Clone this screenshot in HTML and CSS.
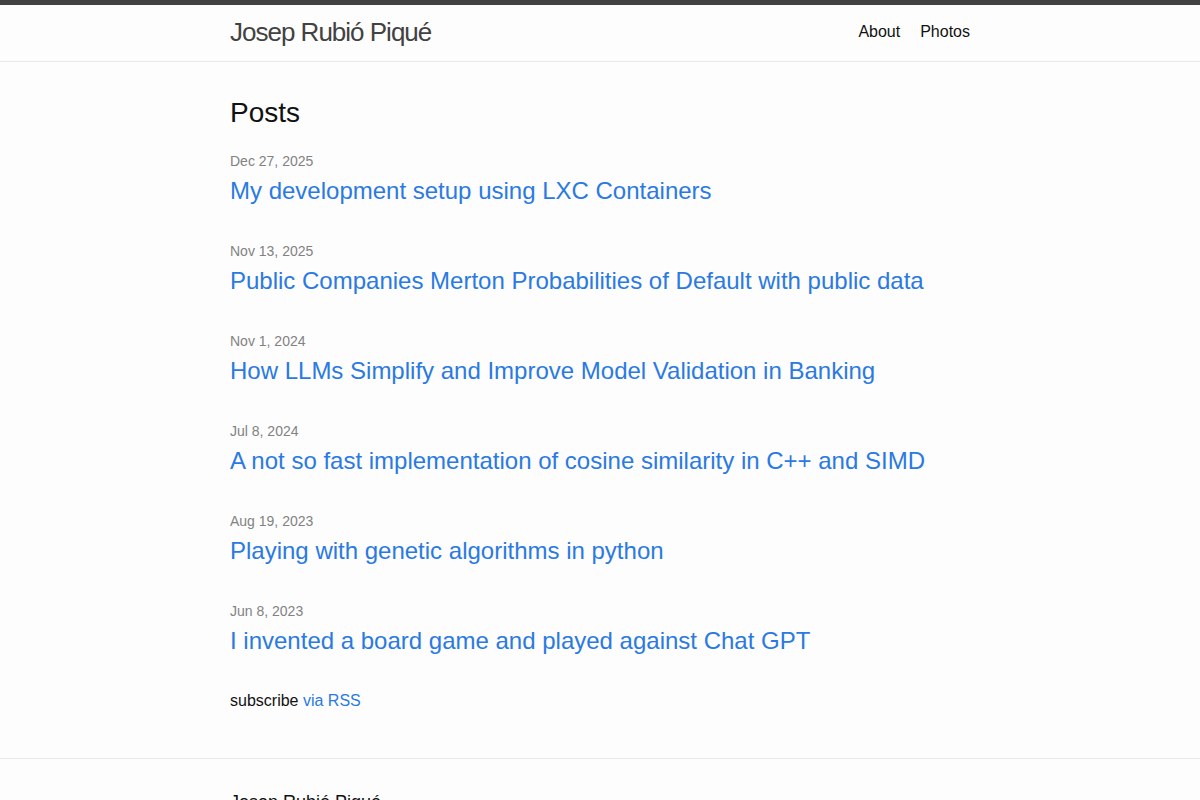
FILE: index.html
```html
<!DOCTYPE html>
<html lang="en">
<head>
  <meta charset="UTF-8" />
  <meta name="viewport" content="width=device-width, initial-scale=1.0"/>
  <title>Josep Rubió Piqué</title>
  <link rel="stylesheet" href="styles.css">
</head>
<body>

  <!-- Header -->
  <header class="site-header">
    <div class="wrapper header-row">
      <a class="site-title" href="#">Josep Rubió Piqué</a>
      <nav class="site-nav">
        <a class="page-link" href="#">About</a>
        <a class="page-link" href="#">Photos</a>
      </nav>
    </div>
  </header>

  <!-- Posts -->
  <main class="page-content">
    <div class="wrapper">
      <h2 class="post-list-heading">Posts</h2>
      <ul class="post-list">
        <li>
          <span class="post-meta">Dec 27, 2025</span>
          <h3><a class="post-link" href="#">My development setup using LXC Containers</a></h3>
        </li>
        <li>
          <span class="post-meta">Nov 13, 2025</span>
          <h3><a class="post-link" href="#">Public Companies Merton Probabilities of Default with public data</a></h3>
        </li>
        <li>
          <span class="post-meta">Nov 1, 2024</span>
          <h3><a class="post-link" href="#">How LLMs Simplify and Improve Model Validation in Banking</a></h3>
        </li>
        <li>
          <span class="post-meta">Jul 8, 2024</span>
          <h3><a class="post-link" href="#">A not so fast implementation of cosine similarity in C++ and SIMD</a></h3>
        </li>
        <li>
          <span class="post-meta">Aug 19, 2023</span>
          <h3><a class="post-link" href="#">Playing with genetic algorithms in python</a></h3>
        </li>
        <li>
          <span class="post-meta">Jun 8, 2023</span>
          <h3><a class="post-link" href="#">I invented a board game and played against Chat GPT</a></h3>
        </li>
      </ul>
      <p class="rss-subscribe">subscribe <a href="#">via RSS</a></p>
    </div>
  </main>

  <!-- Footer -->
  <footer class="site-footer">
    <div class="wrapper">
      <h2 class="footer-heading">Josep Rubió Piqué</h2>
    </div>
  </footer>

</body>
</html>
```

FILE: styles.css
```css
* {
  margin: 0;
  padding: 0;
  box-sizing: border-box;
}

body {
  font: 400 16px/1.5 "Liberation Sans", Arial, sans-serif;
  color: #111;
  background-color: #fdfdfd;
}

h1, h2, h3, h4, p, ul {
  margin-bottom: 15px;
}

h2, h3 {
  font-weight: 400;
}

a {
  color: #2a7ae2;
  text-decoration: none;
}

.wrapper {
  max-width: 800px;
  margin: 0 auto;
  padding: 0 30px;
}

/* Header */
.site-header {
  box-sizing: content-box;
  border-top: 5px solid #424242;
  border-bottom: 1px solid #e8e8e8;
  min-height: 55.95px;
}

.header-row {
  display: flex;
  justify-content: space-between;
  align-items: flex-start;
}

.site-title {
  font-size: 26px;
  font-weight: 300;
  line-height: 54px;
  letter-spacing: -1px;
  color: #424242;
}

.site-nav {
  display: flex;
  gap: 20px;
  line-height: 54px;
}

.page-link {
  color: #111;
}

/* Posts */
.page-content {
  padding: 30px 0;
}

.post-list-heading {
  font-size: 28px;
}

.post-list {
  list-style: none;
}

.post-list > li {
  margin-bottom: 30px;
}

.post-meta {
  font-size: 14px;
  color: #828282;
}

.post-link {
  display: block;
  font-size: 24px;
}

/* Footer */
.site-footer {
  border-top: 1px solid #e8e8e8;
  padding: 30px 0;
}

.footer-heading {
  font-size: 18px;
  margin-bottom: 15px;
}
```
